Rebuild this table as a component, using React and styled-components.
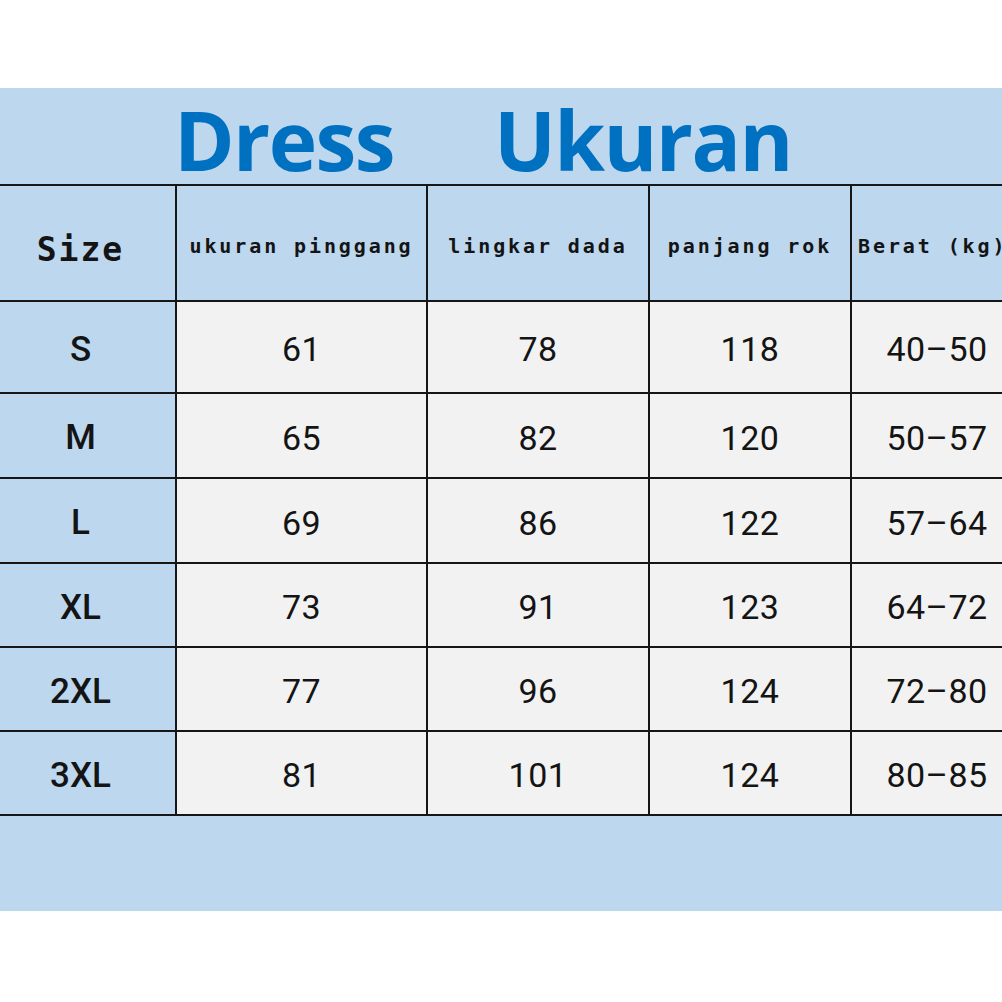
import React from "react";
import styled, { createGlobalStyle } from "styled-components";

const Global = createGlobalStyle`
  html, body { margin: 0; padding: 0; background: #ffffff; }
  body { overflow: hidden; width: 1002px; height: 1002px; }
`;

const Page = styled.div`
  width: 1002px;
  height: 1002px;
  overflow: hidden;
  padding-top: 88px;
  box-sizing: border-box;
`;

const Band = styled.div`
  background: #bdd7ee;
  height: 823px;
  display: flex;
  flex-direction: column;
`;

const Title = styled.div`
  height: 96px;
  display: flex;
  align-items: flex-end;
  gap: 100px;
  padding-left: 174px;
  box-sizing: border-box;
  font-family: "Open Sans", "Liberation Sans", sans-serif;
  font-weight: 700;
  font-size: 82px;
  line-height: 1;
  color: #0070c0;
  letter-spacing: -1.6px;
`;

const Word = styled.span`
  display: block;
  transform: translateY(-4px);
`;

const Grid = styled.div`
  display: grid;
  grid-template-columns: 175px 249px 220px 200px 170px;
  grid-template-rows: 114px 90px 83px 83px 82px 82px 82px;
  column-gap: 2px;
  row-gap: 2px;
  padding: 2px 0;
  background: #161616;
  width: max-content;
`;

const Cell = styled.div`
  display: flex;
  align-items: center;
  justify-content: center;
  white-space: nowrap;
  overflow: hidden;
  background: ${(p) => (p.$tone === "blue" ? "#bdd7ee" : "#f2f2f2")};
  color: #141414;
`;

const HeadCell = styled(Cell)`
  font-family: "DejaVu Sans Mono", "Liberation Mono", monospace;
  font-weight: 700;
  font-size: ${(p) => (p.$big ? "33px" : "20px")};
  letter-spacing: ${(p) => (p.$big ? "2px" : "2.9px")};
  padding-top: ${(p) => (p.$big ? "12px" : "6px")};
  box-sizing: border-box;
  justify-content: ${(p) => (p.$start ? "flex-start" : "center")};
  padding-left: ${(p) => (p.$start ? "6px" : "0")};
  padding-right: ${(p) => (p.$big ? "14px" : "0")};
`;

const SizeCell = styled(Cell)`
  font-family: "Roboto", "Liberation Sans", sans-serif;
  font-weight: 500;
  font-size: 35px;
  padding-right: 14px;
  padding-top: 4px;
  box-sizing: border-box;
`;

const DataCell = styled(Cell)`
  font-family: "Roboto", "Liberation Sans", sans-serif;
  font-weight: 400;
  font-size: 34px;
  letter-spacing: 0.5px;
  padding-top: 4px;
  box-sizing: border-box;
`;

const headers = ["ukuran pinggang", "lingkar dada", "panjang rok", "Berat (kg)"];

const rows = [
  ["S", "61", "78", "118", "40–50"],
  ["M", "65", "82", "120", "50–57"],
  ["L", "69", "86", "122", "57–64"],
  ["XL", "73", "91", "123", "64–72"],
  ["2XL", "77", "96", "124", "72–80"],
  ["3XL", "81", "101", "124", "80–85"],
];

export default function App() {
  return (
    <Page>
      <Global />
      <Band>
        <Title>
          <Word>Dress</Word>
          <Word>Ukuran</Word>
        </Title>
        <Grid>
          <HeadCell $tone="blue" $big>Size</HeadCell>
          {headers.map((h, i) => (
            <HeadCell key={h} $tone="blue" $start={i === 3}>
              {h}
            </HeadCell>
          ))}
          {rows.map((r) => (
            <React.Fragment key={r[0]}>
              <SizeCell $tone="blue">{r[0]}</SizeCell>
              {r.slice(1).map((v, i) => (
                <DataCell key={i}>{v}</DataCell>
              ))}
            </React.Fragment>
          ))}
        </Grid>
      </Band>
    </Page>
  );
}
